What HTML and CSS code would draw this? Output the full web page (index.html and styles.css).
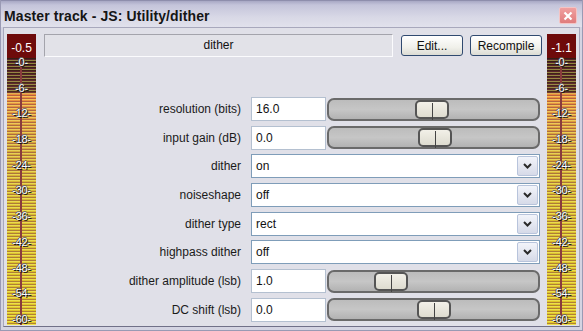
FILE: index.html
```html
<!DOCTYPE html>
<html lang="en">
<head>
    <meta charset="UTF-8">
    <title>Master track - JS: Utility/dither</title>
    <link rel="stylesheet" href="styles.css">
</head>
<body>
    <div class="window">
        <div class="titlebar">
            <span class="title">Master track - JS: Utility/dither</span>
            <span class="close">
                <svg width="10" height="10" viewBox="0 0 10 10"><path d="M1.5 1.5 L8.5 8.5 M8.5 1.5 L1.5 8.5" stroke="#fff" stroke-width="2.2"/></svg>
            </span>
        </div>
        <div class="panel">
            <div class="meter">
                <div class="peak">-0.5</div>
                <div class="scale">
                    <span>-0-</span><span>-6-</span><span>-12-</span><span>-18-</span><span>-24-</span><span>-30-</span>
                    <span>-36-</span><span>-42-</span><span>-48-</span><span>-54-</span><span>-60-</span>
                </div>
            </div>

            <div class="main">
                <div class="header">
                    <div class="fx-name">dither</div>
                    <button class="btn btn-edit">Edit...</button>
                    <button class="btn btn-recompile">Recompile</button>
                </div>

                <div class="params">
                    <label>resolution (bits)</label>
                    <div class="value">16.0</div>
                    <div class="slider"><div class="thumb" style="left: 41%"></div></div>

                    <label>input gain (dB)</label>
                    <div class="value">0.0</div>
                    <div class="slider"><div class="thumb" style="left: 42.5%"></div></div>

                    <label>dither</label>
                    <div class="select">on<span class="arrow"><svg width="9" height="6" viewBox="0 0 9 6"><path d="M1 1 L4.5 4.5 L8 1" fill="none" stroke="#2a2a2a" stroke-width="2"/></svg></span></div>

                    <label>noiseshape</label>
                    <div class="select">off<span class="arrow"><svg width="9" height="6" viewBox="0 0 9 6"><path d="M1 1 L4.5 4.5 L8 1" fill="none" stroke="#2a2a2a" stroke-width="2"/></svg></span></div>

                    <label>dither type</label>
                    <div class="select">rect<span class="arrow"><svg width="9" height="6" viewBox="0 0 9 6"><path d="M1 1 L4.5 4.5 L8 1" fill="none" stroke="#2a2a2a" stroke-width="2"/></svg></span></div>

                    <label>highpass dither</label>
                    <div class="select">off<span class="arrow"><svg width="9" height="6" viewBox="0 0 9 6"><path d="M1 1 L4.5 4.5 L8 1" fill="none" stroke="#2a2a2a" stroke-width="2"/></svg></span></div>

                    <label>dither amplitude (lsb)</label>
                    <div class="value">1.0</div>
                    <div class="slider"><div class="thumb" style="left: 21.5%"></div></div>

                    <label>DC shift (lsb)</label>
                    <div class="value">0.0</div>
                    <div class="slider"><div class="thumb" style="left: 42%"></div></div>
                </div>
            </div>

            <div class="meter">
                <div class="peak">-1.1</div>
                <div class="scale">
                    <span>-0-</span><span>-6-</span><span>-12-</span><span>-18-</span><span>-24-</span><span>-30-</span>
                    <span>-36-</span><span>-42-</span><span>-48-</span><span>-54-</span><span>-60-</span>
                </div>
            </div>
        </div>
    </div>
</body>
</html>
```

FILE: styles.css
```css
* {
    margin: 0;
    padding: 0;
    box-sizing: border-box;
}

body {
    font-family: 'Liberation Sans', Arial, sans-serif;
    font-size: 12px;
    color: #111;
    background: #dcdce6;
}

.window {
    width: 583px;
    height: 331px;
    display: flex;
    flex-direction: column;
    background: #d4d4e2;
    border: 1px solid #9a9ab4;
    border-top: none;
    padding: 0 2px 3px;
}

.titlebar {
    height: 27px;
    display: flex;
    align-items: center;
    justify-content: space-between;
    padding: 3px 5px 0 3px;
    margin: 0 -2px;
    background: linear-gradient(to bottom, #a8a8c4 0, #c4c4da 4px, #d8d8e6 16px, #e2e2ec 27px);
    border-top: 1px solid #8e8eac;
}

.title {
    font-size: 14px;
    font-weight: bold;
    color: #151515;
    letter-spacing: 0.1px;
}

.close {
    width: 18px;
    height: 17px;
    display: flex;
    align-items: center;
    justify-content: center;
    background: linear-gradient(to bottom, #f0a0a0, #e07c7c);
    border: 1px solid #f4c4c4;
    border-radius: 2px;
}

.panel {
    flex: 1;
    display: flex;
    background: #e0e0e8;
    border: 1px solid #a8a8bc;
    border-bottom-color: #707088;
    padding: 6px 3px 1px 3px;
}

/* level meters */
.meter {
    width: 29px;
    display: flex;
    flex-direction: column;
}

.peak {
    height: 24px;
    background: #6e0b0b;
    color: #fff;
    text-align: center;
    font-size: 12px;
    padding-top: 7px;
}

.scale {
    position: relative;
    flex: 1;
    display: flex;
    flex-direction: column;
    justify-content: space-between;
    align-items: center;
    padding-bottom: 2px;
    background:
        repeating-linear-gradient(to bottom, rgba(0, 0, 0, 0) 0 1px, rgba(120, 40, 70, 0.45) 1px 2px, rgba(255, 255, 120, 0.45) 2px 3px),
        linear-gradient(to bottom, #351c12 0, #4e2e1e 34px, #ec8c3c 36px, #e49a40 52px, #d4a83a 90px, #d8bc30 140px, #e0c826 100%);
}

.scale::before {
    content: '';
    position: absolute;
    top: 0;
    bottom: 0;
    left: 13px;
    width: 2px;
    background: #8a3c3c;
}

.scale span {
    position: relative;
    font-size: 11px;
    line-height: 8px;
    color: #fff;
    letter-spacing: -0.3px;
    text-shadow: 1px 1px 0 #111, -1px 0 0 #444, 0 -1px 0 #666;
}

/* center area */
.main {
    flex: 1;
    display: flex;
    flex-direction: column;
    padding: 0 5px 0 8px;
}

.header {
    display: flex;
    align-items: center;
    height: 23px;
}

.fx-name {
    width: 349px;
    height: 23px;
    line-height: 21px;
    text-align: center;
    background: #e2e2e8;
    border: 1px solid;
    border-color: #a4a4ac #fbfbfd #fbfbfd #a4a4ac;
}

.btn {
    height: 21px;
    font-family: inherit;
    font-size: 12px;
    color: #111;
    background: linear-gradient(to bottom, #ffffff, #f0f0ea 60%, #dcdcd4);
    border: 1px solid #304a70;
    border-radius: 3px;
}

.btn-edit {
    width: 62px;
    margin-left: 8px;
}

.btn-recompile {
    width: 72px;
    margin-left: 7px;
}

/* parameter rows */
.params {
    display: grid;
    grid-template-columns: 1fr 75px 214px;
    grid-auto-rows: 24px;
    row-gap: 4.7px;
    margin-top: 40px;
    margin-right: 2px;
    align-items: center;
}

.params label {
    text-align: right;
    padding-right: 10px;
    color: #1a1a1a;
}

.value {
    height: 24px;
    line-height: 22px;
    padding-left: 4px;
    background: #fff;
    border: 1px solid #b4c0d0;
}

.slider {
    position: relative;
    height: 23px;
    margin-left: 1px;
    background: linear-gradient(to bottom, #bcbcbc, #c6c6c6 50%, #b2b2b2);
    border: 2px solid #6a6a6a;
    border-radius: 7px;
}

.thumb {
    position: absolute;
    top: 0;
    width: 34px;
    height: 19px;
    background: linear-gradient(to bottom, #f2f0e8, #dedcd0);
    border: 2px solid #555;
    border-radius: 5px;
}

.thumb::after {
    content: '';
    position: absolute;
    top: 1px;
    bottom: -3px;
    left: 15px;
    width: 1px;
    background: #444;
}

.select {
    grid-column: 2 / 4;
    position: relative;
    height: 24px;
    line-height: 22px;
    padding-left: 4px;
    background: #fff;
    border: 1px solid #7f9db9;
}

.arrow {
    position: absolute;
    top: 1px;
    right: 1px;
    width: 21px;
    height: 20px;
    display: flex;
    align-items: center;
    justify-content: center;
    background: linear-gradient(to bottom, #f2f4fa, #d6dae8);
    border: 1px solid #b8c4dc;
    border-radius: 2px;
}
```
